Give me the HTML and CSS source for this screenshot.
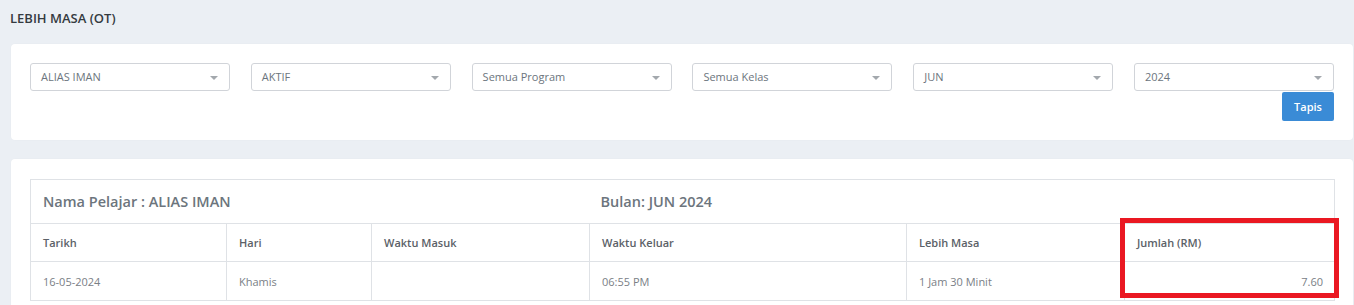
FILE: index.html
```html
<!DOCTYPE html>
<html lang="ms">
<head>
    <meta charset="UTF-8">
    <meta name="viewport" content="width=device-width, initial-scale=1.0">
    <title>Lebih Masa (OT)</title>
    <link rel="stylesheet" href="styles.css">
</head>
<body>

    <div class="page">
        <h4 class="page-title">LEBIH MASA (OT)</h4>

        <!-- Penapis -->
        <div class="card filter-card">
            <div class="filter-row">
                <div class="filter-col"><div class="select">ALIAS IMAN<span class="caret"></span></div></div>
                <div class="filter-col"><div class="select">AKTIF<span class="caret"></span></div></div>
                <div class="filter-col"><div class="select">Semua Program<span class="caret"></span></div></div>
                <div class="filter-col"><div class="select">Semua Kelas<span class="caret"></span></div></div>
                <div class="filter-col"><div class="select">JUN<span class="caret"></span></div></div>
                <div class="filter-col"><div class="select">2024<span class="caret"></span></div></div>
            </div>
            <div class="filter-actions">
                <button class="btn-tapis">Tapis</button>
            </div>
        </div>

        <!-- Laporan -->
        <div class="card table-card">
            <table class="ot-table">
                <colgroup>
                    <col style="width: 196px">
                    <col style="width: 145px">
                    <col style="width: 218px">
                    <col style="width: 317px">
                    <col style="width: 218px">
                    <col style="width: 210px">
                </colgroup>
                <tr class="title-row">
                    <td colspan="3" class="title-left">Nama Pelajar : ALIAS IMAN</td>
                    <td colspan="3" class="title-right">Bulan: JUN 2024</td>
                </tr>
                <tr class="head-row">
                    <th>Tarikh</th>
                    <th>Hari</th>
                    <th>Waktu Masuk</th>
                    <th>Waktu Keluar</th>
                    <th>Lebih Masa</th>
                    <th>Jumlah (RM)</th>
                </tr>
                <tr class="data-row">
                    <td>16-05-2024</td>
                    <td>Khamis</td>
                    <td></td>
                    <td>06:55 PM</td>
                    <td>1 Jam 30 Minit</td>
                    <td class="amount">7.60</td>
                </tr>
            </table>
            <div class="highlight"></div>
        </div>
    </div>

</body>
</html>
```

FILE: styles.css
```css
body {
    margin: 0;
    font-family: "Open Sans", "Liberation Sans", sans-serif;
    background: #ebeff4;
    color: #6c757d;
    overflow: hidden;
}
.page {
    padding: 0 1px 0 11px;
}
.page-title {
    margin: 0 0 0 -1px;
    padding-top: 9px;
    height: 44px;
    box-sizing: border-box;
    font-size: 13px;
    font-weight: 600;
    color: #343a40;
}
.card {
    background: white;
    border-radius: 4px;
    box-shadow: 0px 0px 2px rgba(0, 0, 0, 0.03);
}
.filter-card {
    padding: 19px;
    margin-bottom: 19px;
}
.filter-row {
    display: flex;
    margin: 0 -10.4px;
}
.filter-col {
    flex: 1;
    padding: 0 10.4px;
}
.select {
    position: relative;
    height: 28px;
    box-sizing: border-box;
    border: 1px solid #d1d4d9;
    border-radius: 3px;
    padding: 0 10px;
    font-size: 11px;
    line-height: 26px;
    color: #6c757d;
}
.caret {
    position: absolute;
    right: 11px;
    top: 12px;
    border-left: 4px solid transparent;
    border-right: 4px solid transparent;
    border-top: 4px solid #a3a8ad;
}
.filter-actions {
    display: flex;
    justify-content: flex-end;
    padding-top: 1px;
}
.btn-tapis {
    background: #3a8bd6;
    color: white;
    border: none;
    border-radius: 2px;
    width: 52px;
    height: 29px;
    padding: 0;
    font-family: inherit;
    font-size: 11px;
    font-weight: 600;
}
.table-card {
    position: relative;
    padding: 20px 18px 20px 19px;
    height: 126px;
}
.ot-table {
    width: 1304px;
    table-layout: fixed;
    border-collapse: collapse;
}
.ot-table td,
.ot-table th {
    border: 1px solid #dfe2e6;
    padding: 0 12px;
    text-align: left;
    font-size: 11px;
}
.title-row td {
    height: 43px;
    font-size: 14.5px;
    font-weight: 600;
    color: #6c757d;
}
.title-row .title-left {
    border-right-style: hidden;
}
.title-row .title-right {
    border-left-style: hidden;
    padding-left: 11px;
}
.head-row th {
    height: 37px;
    font-weight: 600;
    color: #5b6167;
}
.data-row td {
    height: 38px;
    color: #7a8086;
}
.data-row td.amount {
    text-align: right;
    padding-right: 11px;
}
.highlight {
    position: absolute;
    left: 1109px;
    top: 59px;
    width: 219px;
    height: 80px;
    box-sizing: border-box;
    border: 5px solid #ea1822;
}
```
